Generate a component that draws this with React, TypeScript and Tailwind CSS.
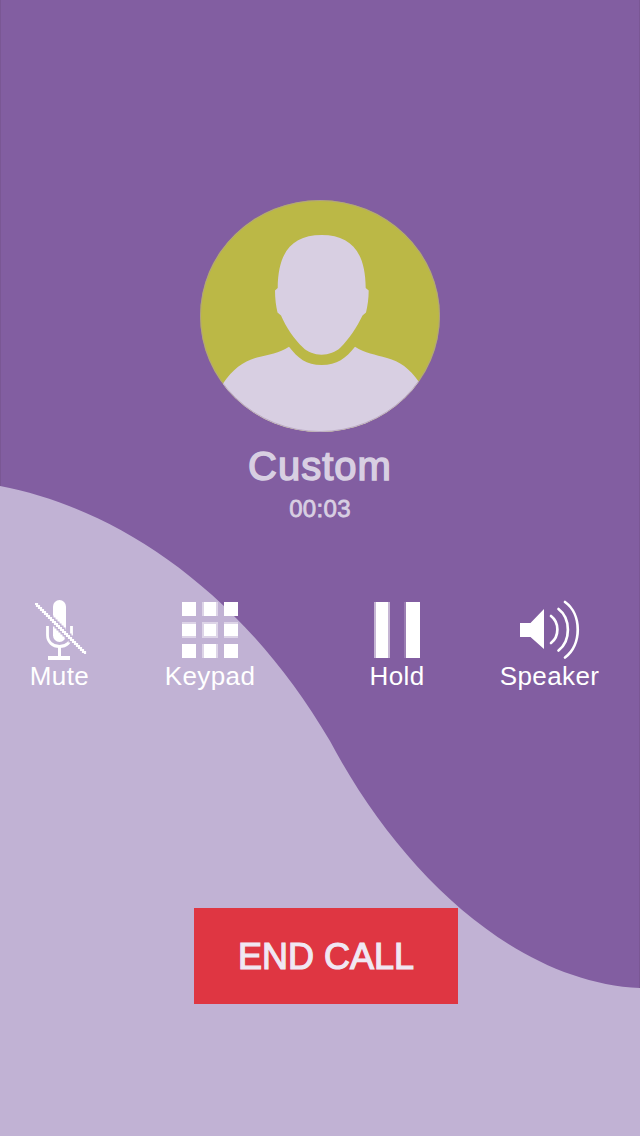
import { ReactNode } from 'react';

interface ActionProps {
  label: string;
  children: ReactNode;
}

// stepped diagonal of the low resolution mute glyph
const slash = 'M5 4' + 'h2v2'.repeat(25);

function Wave() {
  return (
    <svg
      className="absolute inset-0"
      width="640"
      height="1136"
      viewBox="0 0 640 1136"
    >
      <path
        d="M0 0H640V988C515 982 400 873 330 741C240 588 115 508 0 486Z"
        fill="#825ea1"
      />
      <path d="M0.5 0V486M639.5 0V988" stroke="#77558f" opacity="0.7" />
    </svg>
  );
}

function Avatar() {
  return (
    <svg width="240" height="232" viewBox="0 0 240 232">
      <defs>
        <clipPath id="avatar">
          <ellipse cx="120" cy="116" rx="120" ry="116" />
        </clipPath>
      </defs>
      <g clipPath="url(#avatar)">
        <rect width="240" height="232" fill="#bbb846" />
        <g fill="#d8cfe2">
          <path d="M121.7 35C92 35 78 52 77.7 88L75 90.5C75 99 76 106 77.5 112.5L81 115.5C86 127 94 139 103 147.5C112 157 131 157 140.5 147.5C149 139 157 127 162.5 115.5L166 112.5C167.5 106 168.7 99 168.7 90.5L165.7 88C165.5 52 151 35 121.7 35Z" />
          <path d="M89 146.7C98 158 106 165 121.7 165C137 165 146 158 155 146.7C165 153 175 154.5 187 158C200 161.5 209 168 219 182V240H23V183.5C33 169 43 161.5 57 157.5C69 154.5 79 153 89 146.7Z" />
        </g>
        <ellipse
          cx="120"
          cy="116"
          rx="119.5"
          ry="115.5"
          fill="none"
          stroke="#a893b4"
          opacity="0.6"
        />
      </g>
    </svg>
  );
}

function MuteIcon() {
  return (
    <svg width="60" height="60" viewBox="0 0 60 60" fill="none" stroke="#fff">
      <rect x="23" width="13" height="42" rx="6.5" fill="#fff" stroke="none" />
      <path
        d="M17.5 26V35C17.5 42 22.5 46.500 29.5 46.500S41.5 42 41.5 35V26"
        strokeWidth="2.8"
      />
      <path d="M29.5 46V57" strokeWidth="3" />
      <path d="M18 58H40" strokeWidth="4" />
      <path d={slash} stroke="#c1b2d4" strokeWidth="5" />
      <path d={slash} strokeWidth="2.2" />
    </svg>
  );
}

function KeypadIcon() {
  return (
    <svg width="60" height="60" viewBox="0 0 60 60" fill="#fff">
      <g opacity="0.45">
        <path d="M22 2h16v14H22zM22 22h16v16H22zM22 44h16v14H22z" />
        <path d="M2 22h14v16H2zM44 22h14v16H44z" />
      </g>
      <path d="M2 2h14v14H2zM24 2h12v14H24zM44 2h14v14H44z" />
      <path d="M2 24h14v12H2zM24 24h12v12H24zM44 24h14v12H44z" />
      <path d="M2 44h14v14H2zM24 44h12v14H24zM44 44h14v14H44z" />
    </svg>
  );
}

function HoldIcon() {
  return (
    <svg width="60" height="60" viewBox="0 0 60 60" fill="#fff">
      <path d="M7 2h16v56H7z" opacity="0.55" />
      <path d="M9 2h12v56H9zM39 2h14v56H39z" />
      <path d="M37 2h2v56H37z" opacity="0.2" />
    </svg>
  );
}

function SpeakerIcon() {
  return (
    <svg width="60" height="60" viewBox="0 0 60 60" fill="none">
      <path d="M0 23H10.5L24 9V49L10.5 37H0Z" fill="#fff" />
      <g stroke="#fff" strokeWidth="2.7" strokeLinecap="round">
        <path d="M31 16C39.5 22.5 39.5 36.5 31 43" />
        <path d="M38.5 9C51 18.5 51 41 38.5 50.5" />
        <path d="M45 2C62 14 62 45 45 57.5" />
      </g>
    </svg>
  );
}

function Action({ label, children }: ActionProps) {
  return (
    <button className="flex flex-col items-center text-white">
      {children}
      <span className="text-[26px] leading-8 tracking-[0.4px]">{label}</span>
    </button>
  );
}

export default function App() {
  return (
    <div className="relative h-[1136px] w-[640px] overflow-hidden bg-[#c1b2d4] font-['Liberation_Sans',Arial,sans-serif]">
      <Wave />
      <main className="relative flex flex-col pt-[200px]">
        <section className="flex h-[400px] flex-col items-center text-[#d8cfe2]">
          <Avatar />
          <h1 className="mt-2.5 text-[40px] leading-[48px] font-normal tracking-[1px] [-webkit-text-stroke:1.5px]">
            Custom
          </h1>
          <p className="mt-[3px] text-2xl leading-8 tracking-[0.3px] [-webkit-text-stroke:0.8px]">
            00:03
          </p>
        </section>
        <section className="grid grid-cols-[119px_182px_192px_113px]">
          <Action label="Mute">
            <MuteIcon />
          </Action>
          <Action label="Keypad">
            <KeypadIcon />
          </Action>
          <Action label="Hold">
            <HoldIcon />
          </Action>
          <Action label="Speaker">
            <SpeakerIcon />
          </Action>
        </section>
        <button className="mt-[216px] ml-[194px] h-24 w-[264px] bg-[#df3642] pt-0.5 text-4xl text-[#f0e8f3] [-webkit-text-stroke:1.2px]">
          END CALL
        </button>
      </main>
    </div>
  );
}
